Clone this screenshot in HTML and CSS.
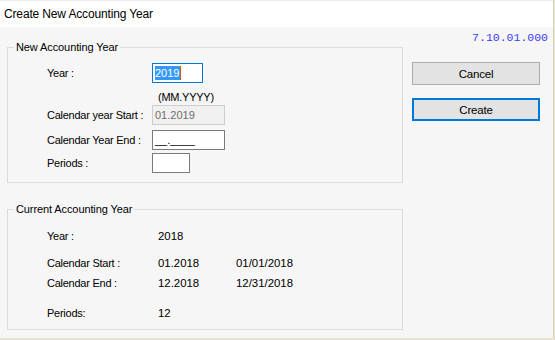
FILE: index.html
```html
<!DOCTYPE html>
<html lang="en">
<head>
  <meta charset="UTF-8"/>
  <title>Create New Accounting Year</title>
  <link rel="stylesheet" href="styles.css">
</head>
<body>
<div class="window">
  <div class="titlebar">Create New Accounting Year</div>

  <div class="client">
    <div class="groups">
      <fieldset class="group new-year">
        <legend>New Accounting Year</legend>
        <div class="row">
          <span class="label">Year :</span>
          <div class="textbox focused year-box"><span class="selection">2019</span></div>
        </div>
        <div class="row hint">
          <span class="label"></span>
          <span class="value">(MM.YYYY)</span>
        </div>
        <div class="row start">
          <span class="label">Calendar year Start :</span>
          <div class="textbox disabled date-box">01.2019</div>
        </div>
        <div class="row end">
          <span class="label">Calendar Year End :</span>
          <div class="textbox date-box">__.____</div>
        </div>
        <div class="row periods">
          <span class="label">Periods :</span>
          <div class="textbox periods-box"></div>
        </div>
      </fieldset>

      <fieldset class="group current-year">
        <legend>Current Accounting Year</legend>
        <div class="line">
          <span class="label">Year :</span>
          <span class="value">2018</span>
        </div>
        <div class="line cal-start">
          <span class="label">Calendar Start :</span>
          <span class="value">01.2018</span>
          <span class="value">01/01/2018</span>
        </div>
        <div class="line cal-end">
          <span class="label">Calendar End :</span>
          <span class="value">12.2018</span>
          <span class="value">12/31/2018</span>
        </div>
        <div class="line cur-periods">
          <span class="label">Periods:</span>
          <span class="value">12</span>
        </div>
      </fieldset>
    </div>

    <div class="side">
      <div class="version">7.10.01.000</div>
      <button class="btn cancel">Cancel</button>
      <button class="btn create default">Create</button>
    </div>
  </div>
</div>
</body>
</html>
```

FILE: styles.css
```css
html, body {
  margin: 0;
  padding: 0;
  background-color: #e8e4d0;
}
body {
  width: 555px;
  height: 340px;
  overflow: hidden;
  font-family: "Liberation Sans", Arial, sans-serif;
  font-size: 11px;
  letter-spacing: -0.25px;
  color: #000;
}
.window {
  width: 553px;
  height: 338px;
  border-right: 1px solid #d6d2bc;
  background-color: #f6f6f6;
}
.titlebar {
  height: 20px;
  padding: 6px 0 0 4px;
  background-color: #fff;
  border-top: 1px solid #ececec;
  box-sizing: content-box;
  font-size: 12px;
  letter-spacing: -0.15px;
  line-height: 14px;
}
.client {
  display: flex;
  height: 311px;
}
.groups {
  width: 396px;
  padding: 14px 0 0 7px;
}
.group {
  margin: 0;
  padding: 0 0 0 6px;
  border: 1px solid #dcdcdc;
  width: 396px;
  box-sizing: border-box;
}
.group legend {
  padding: 0 2px;
  line-height: 13px;
  letter-spacing: -0.1px;
}
.new-year {
  padding-top: 9px;
  padding-bottom: 9px;
}
.current-year {
  margin-top: 20px;
  padding-top: 12px;
  padding-bottom: 8px;
}
.row {
  display: flex;
  align-items: center;
  height: 20px;
  padding-left: 33px;
}
.row .label {
  width: 105px;
  flex-shrink: 0;
}
.row.hint {
  height: 13px;
  margin-top: 7px;
}
.row.hint .value {
  padding-left: 6px;
}
.row.start {
  margin-top: 2px;
}
.row.end {
  margin-top: 5px;
}
.row.periods {
  margin-top: 3px;
}
.textbox {
  box-sizing: border-box;
  height: 20px;
  border: 1px solid #7a7a7a;
  background-color: #fff;
  padding: 2px 0 0 2px;
  line-height: 14px;
  letter-spacing: 0;
}
.textbox.focused {
  border-color: #0078d7;
}
.textbox.disabled {
  border-color: #cccccc;
  background-color: #f0f0f0;
  color: #6d6d6d;
}
.year-box {
  width: 51px;
}
.date-box {
  width: 73px;
}
.periods-box {
  width: 38px;
}
.selection {
  display: inline-block;
  background-color: #3399ff;
  color: #fff;
  padding: 0 1px 0 0;
  border-right: 1px solid #d25a00;
  line-height: 14px;
}
.line {
  display: flex;
  align-items: center;
  height: 16px;
  padding-left: 33px;
}
.line .label {
  width: 111px;
  flex-shrink: 0;
}
.line .value {
  width: 78px;
  font-size: 11.4px;
  letter-spacing: 0;
}
.line.cal-start {
  margin-top: 11px;
}
.line.cal-end {
  margin-top: 4px;
}
.line.cur-periods {
  margin-top: 14px;
}
.side {
  flex: 1;
  display: flex;
  flex-direction: column;
  align-items: flex-start;
  padding: 4px 0 0 9px;
}
.version {
  align-self: flex-end;
  margin-right: 5px;
  font-family: "Liberation Mono", "Courier New", monospace;
  font-size: 11.5px;
  letter-spacing: 0;
  line-height: 13px;
  color: #3b3bf5;
}
.btn {
  box-sizing: border-box;
  width: 128px;
  height: 23px;
  margin: 0;
  padding: 0;
  border: 1px solid #adadad;
  background-color: #e3e3e3;
  font-family: "Liberation Sans", Arial, sans-serif;
  font-size: 11.5px;
  letter-spacing: -0.2px;
  color: #000;
}
.cancel {
  margin-top: 18px;
}
.create {
  margin-top: 13px;
}
.btn.default {
  border: 2px solid #0078d7;
}
```
